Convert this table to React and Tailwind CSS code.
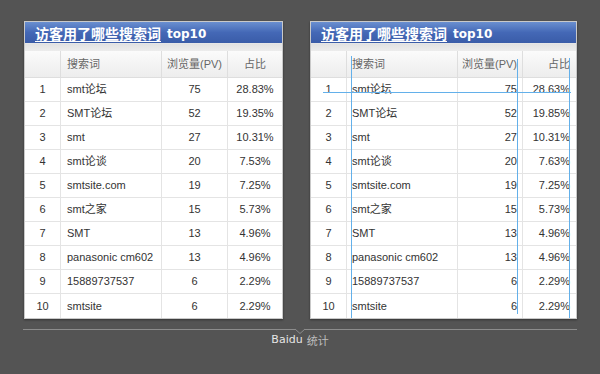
import React from "react";

// 左右两张表的数据
const rowsLeft = [
  ["1", "smt论坛", "75", "28.83%"],
  ["2", "SMT论坛", "52", "19.35%"],
  ["3", "smt", "27", "10.31%"],
  ["4", "smt论谈", "20", "7.53%"],
  ["5", "smtsite.com", "19", "7.25%"],
  ["6", "smt之家", "15", "5.73%"],
  ["7", "SMT", "13", "4.96%"],
  ["8", "panasonic cm602", "13", "4.96%"],
  ["9", "15889737537", "6", "2.29%"],
  ["10", "smtsite", "6", "2.29%"],
];

const pctRight = ["28.63%", "19.85%", "10.31%", "7.63%", "7.25%", "5.73%", "4.96%", "4.96%", "2.29%", "2.29%"];
const rowsRight = rowsLeft.map((r, i) => [r[0], r[1], r[2], pctRight[i]]);

// 每张表的列宽与对齐方式
const layouts = {
  left: {
    panel: "w-[259px]",
    c0: "w-[35px] justify-center",
    c1: "w-[101px] pl-[6px]",
    c2: "w-[66px] justify-center",
    c3: "w-[55px] justify-center",
  },
  right: {
    panel: "w-[267px]",
    c0: "w-[35px] justify-center",
    c1: "w-[111px] pl-[5px]",
    c2: "w-[65px] justify-end pr-[5px]",
    c3: "w-[54px] justify-end pr-[6px]",
  },
};

const cell = "shrink-0 flex items-center";

const Panel = ({ rows, side, guides }) => {
  const l = layouts[side];
  return (
    <div className={`relative bg-white border border-[#c9c9c9] shadow-[0_1px_2px_rgba(0,0,0,0.4)] ${l.panel}`}>
      {/* 标题栏 */}
      <div className="h-[22px] bg-gradient-to-b from-[#6a8fd0] via-[#4468b6] to-[#3a5ca8] border-b border-[#e6e6e6] flex items-center pl-[10px] text-white font-bold">
        <span className="text-[14px] underline underline-offset-[2px] leading-none font-['Noto_Sans_CJK_SC',sans-serif]">访客用了哪些搜索词</span>
        <span className="ml-[6px] text-[12px] leading-none mt-[2px] font-['DejaVu_Sans',sans-serif]">top10</span>
      </div>
      <div className="h-[7px] bg-gradient-to-b from-[#e2e2e2] to-[#ececec]" />
      <div className="text-[11px] text-[#333] font-['Liberation_Sans','Noto_Sans_CJK_SC',sans-serif]">
        {/* 表头 */}
        <div className="flex h-[27px] bg-gradient-to-b from-[#fbfbfb] to-[#ededed] text-[#666] border-b border-[#dedede]">
          <div className={`${cell} ${l.c0}`} />
          <div className={`${cell} border-l border-[#dedede] ${l.c1}`}>搜索词</div>
          <div className={`${cell} border-l border-[#dedede] ${l.c2}`}>浏览量(PV)</div>
          <div className={`${cell} border-l border-[#dedede] ${l.c3}`}>占比</div>
        </div>
        {rows.map((r, i) => (
          <div key={i} className={`flex h-[24px] ${i < rows.length - 1 ? "border-b border-[#e4e4e4]" : ""}`}>
            <div className={`${cell} ${l.c0}`}>{r[0]}</div>
            <div className={`${cell} border-l border-[#e4e4e4] whitespace-nowrap overflow-hidden ${l.c1}`}>{r[1]}</div>
            <div className={`${cell} border-l border-[#e4e4e4] ${l.c2}`}>{r[2]}</div>
            <div className={`${cell} border-l border-[#e4e4e4] ${l.c3}`}>{r[3]}</div>
          </div>
        ))}
      </div>
      {/* 参考线（叠加在表格上） */}
      {guides && (
        <>
          <div className="absolute left-[12px] top-[70px] w-[248px] h-[1px] bg-[#63b0ea]" />
          <div className="absolute left-[40px] top-[34px] w-[1px] h-[262px] bg-[#63b0ea]" />
          <div className="absolute left-[206px] top-[37px] w-[1px] h-[255px] bg-[#63b0ea]" />
          <div className="absolute left-[258px] top-[36px] w-[1px] h-[260px] bg-[#63b0ea]" />
        </>
      )}
    </div>
  );
};

export default function App() {
  return (
    <div className="w-[600px] h-[374px] bg-[#545454] pt-[21px]">
      <div className="flex pl-[24px] gap-[27px]">
        <Panel rows={rowsLeft} side="left" />
        <Panel rows={rowsRight} side="right" guides />
      </div>
      {/* 底部分隔线与署名 */}
      <div className="relative mx-[23px] mt-[10px] h-[1px] bg-[#8c8c8c]">
        <svg className="absolute left-[272px] top-[-1px]" width="10" height="6" viewBox="0 0 10 6">
          <path d="M0 1 L5 5.5 L10 1" fill="#545454" stroke="#8c8c8c" strokeWidth="1" />
        </svg>
      </div>
      <div className="flex justify-center mt-[3px] text-[11px] leading-[14px]">
        <span className="text-[#e6e6e6] font-['DejaVu_Sans',sans-serif]">Baidu</span>
        <span className="ml-[4px] text-[#bdbdbd] font-['Noto_Sans_CJK_SC',sans-serif]">统计</span>
      </div>
    </div>
  );
}
